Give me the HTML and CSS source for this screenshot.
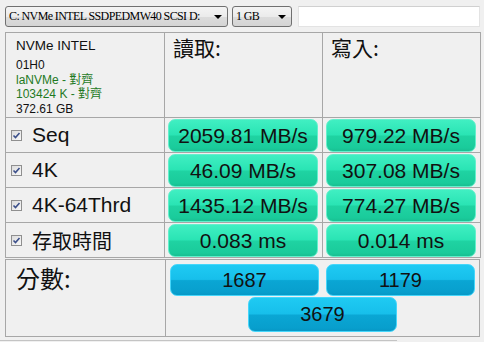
FILE: index.html
```html
<!DOCTYPE html>
<html>
<head>
<meta charset="utf-8">
<link rel="stylesheet" href="styles.css">
</head>
<body>
<div class="top">
  <div class="select sel-drive"><span class="sel-text">C: NVMe INTEL SSDPEDMW40 SCSI D:</span><span class="arrow"></span></div>
  <div class="select sel-size"><span class="sel-text">1 GB</span><span class="arrow"></span></div>
  <div class="input"></div>
</div>
<div class="grid">
  <div class="cell info">
    <div class="name">NVMe INTEL</div>
    <div class="line">01H0</div>
    <div class="line ok">laNVMe - 對齊</div>
    <div class="line ok">103424 K - 對齊</div>
    <div class="line">372.61 GB</div>
  </div>
  <div class="cell head">讀取:</div>
  <div class="cell head">寫入:</div>

  <div class="cell label"><span class="cb"><svg width="9" height="9" viewBox="0 0 9 9"><path d="M1.5 4.5 L3.5 6.5 L7.5 2" fill="none" stroke="#3b4f8a" stroke-width="1.6"/></svg></span>Seq</div>
  <div class="cell val"><div class="bar">2059.81 MB/s</div></div>
  <div class="cell val"><div class="bar">979.22 MB/s</div></div>

  <div class="cell label"><span class="cb"><svg width="9" height="9" viewBox="0 0 9 9"><path d="M1.5 4.5 L3.5 6.5 L7.5 2" fill="none" stroke="#3b4f8a" stroke-width="1.6"/></svg></span>4K</div>
  <div class="cell val"><div class="bar">46.09 MB/s</div></div>
  <div class="cell val"><div class="bar">307.08 MB/s</div></div>

  <div class="cell label"><span class="cb"><svg width="9" height="9" viewBox="0 0 9 9"><path d="M1.5 4.5 L3.5 6.5 L7.5 2" fill="none" stroke="#3b4f8a" stroke-width="1.6"/></svg></span>4K-64Thrd</div>
  <div class="cell val"><div class="bar">1435.12 MB/s</div></div>
  <div class="cell val"><div class="bar">774.27 MB/s</div></div>

  <div class="cell label cjk"><span class="cb"><svg width="9" height="9" viewBox="0 0 9 9"><path d="M1.5 4.5 L3.5 6.5 L7.5 2" fill="none" stroke="#3b4f8a" stroke-width="1.6"/></svg></span>存取時間</div>
  <div class="cell val"><div class="bar">0.083 ms</div></div>
  <div class="cell val"><div class="bar">0.014 ms</div></div>
</div>
<div class="score">
  <div class="cell score-label">分數:</div>
  <div class="cell score-vals">
    <div class="sbar">1687</div>
    <div class="sbar">1179</div>
    <div class="sbar total">3679</div>
  </div>
</div>
<div class="bottom-line"></div>
</body>
</html>
```
FILE: styles.css
```css
html, body {
  margin: 0;
  background: #f0f0f0;
  width: 484px;
  height: 342px;
  overflow: hidden;
}
body {
  font-family: "Liberation Sans", Arial, sans-serif;
  color: #111;
}
.top {
  display: flex;
  padding: 6px 0 0 5px;
  height: 21px;
}
.select {
  box-sizing: border-box;
  height: 21px;
  border: 1px solid #707070;
  border-radius: 3px;
  background: linear-gradient(#f4f4f4 0%, #ebebeb 50%, #dcdcdc 52%, #d4d4d4 100%);
  display: flex;
  align-items: center;
  font-family: "Liberation Serif", "Times New Roman", serif;
  font-size: 12px;
  color: #000;
  position: relative;
  overflow: hidden;
}
.sel-text {
  flex: 1;
  white-space: nowrap;
  overflow: hidden;
  padding-left: 3px;
  letter-spacing: -0.6px;
}
.arrow {
  width: 0;
  height: 0;
  border-left: 4px solid transparent;
  border-right: 4px solid transparent;
  border-top: 4px solid #000;
  margin: 1px 5px 0 2px;
  flex: none;
}
.sel-drive { width: 223px; }
.sel-size { width: 60px; margin-left: 4px; }
.input {
  box-sizing: border-box;
  width: 182px;
  height: 21px;
  margin-left: 6px;
  background: #fff;
  border: 1px solid #e3e3e3;
  border-top-color: #d0d0d0;
}
.grid {
  display: grid;
  grid-template-columns: 158px 157px 157px;
  grid-template-rows: 84px 34px 34px 34px 34px;
  gap: 1px;
  background: #a7a7a7;
  border: 1px solid #a7a7a7;
  margin: 5px 0 0 5px;
  width: max-content;
}
.cell {
  background: #f0f0f0;
}
.info {
  padding: 4px 0 0 10px;
  box-sizing: border-box;
}
.name {
  font-size: 13.5px;
  line-height: 17px;
  margin-bottom: 4px;
}
.line {
  font-size: 12px;
  line-height: 14.5px;
  font-family: "Liberation Sans", "Noto Sans CJK TC", sans-serif;
}
.ok { color: #1f7a1f; }
.head {
  font-family: "Noto Sans CJK TC", sans-serif;
  font-size: 21px;
  line-height: 24px;
  padding: 2px 0 0 8px;
  color: #111;
}
.label {
  display: flex;
  align-items: center;
  font-size: 21px;
  padding-left: 5px;
}
.cjk {
  font-family: "Noto Sans CJK TC", sans-serif;
  font-size: 20px;
}
.cb {
  box-sizing: border-box;
  width: 11px;
  height: 11px;
  border: 1px solid #8f8f8f;
  background: linear-gradient(135deg, #dcdcdc, #f8f8f8);
  margin-right: 10px;
  display: flex;
  align-items: center;
  justify-content: center;
  flex: none;
}
.cb svg { display: block; }
.val {
  padding: 1px 4px 0 3px;
}
.bar {
  box-sizing: border-box;
  height: 33px;
  border-radius: 7px;
  border: 1px solid #63f0cc;
  background: linear-gradient(#40efc2 0%, #2ae4b4 48%, #1fd3a2 52%, #1acb9b 90%, #18bf91 100%);
  display: flex;
  align-items: center;
  justify-content: center;
  font-size: 21px;
  color: #111;
  white-space: nowrap;
}
.score {
  display: grid;
  grid-template-columns: 159px 313px;
  gap: 1px;
  background: #a7a7a7;
  border: 1px solid #a7a7a7;
  margin: 1px 0 0 5px;
  width: max-content;
  height: 76px;
}
.score-label {
  font-family: "Noto Sans CJK TC", sans-serif;
  font-size: 24px;
  line-height: 28px;
  padding: 4px 0 0 10px;
}
.score-vals {
  display: flex;
  flex-wrap: wrap;
  justify-content: center;
  align-content: flex-start;
  column-gap: 7px;
  row-gap: 1px;
  padding-top: 4px;
}
.sbar {
  box-sizing: border-box;
  width: 149px;
  height: 32px;
  border-radius: 7px;
  border: 1px solid #45d6fa;
  background: linear-gradient(#1fcaf3 0%, #17bfeb 48%, #0aa6d4 52%, #089fcd 90%, #0798c6 100%);
  display: flex;
  align-items: center;
  justify-content: center;
  font-size: 20px;
  color: #111;
}
.sbar.total { height: 35px; }
.bottom-line {
  width: 397px;
  height: 1px;
  margin-top: 3px;
  background: #c4c4c4;
}
```
